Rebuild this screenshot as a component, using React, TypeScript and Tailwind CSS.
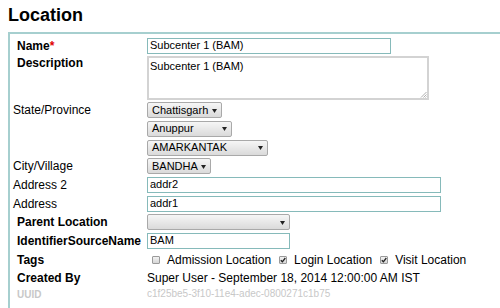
import React from "react";

function Select({ value, width }: { value: string; width: string }) {
  return (
    <div
      className={`${width} flex h-4 items-center justify-between rounded-[2px] border border-[#a9a9a9] bg-gradient-to-b from-[#f6f6f6] to-[#dadada] pl-[4px] pr-[4px] text-[11px] leading-none text-black`}
    >
      <span>{value}</span>
      <svg width="5" height="4" viewBox="0 0 5 4" className="mt-[1px]">
        <path d="M0 0 H5 L2.5 4 Z" fill="#222" />
      </svg>
    </div>
  );
}

function TextInput({ value, width }: { value: string; width: string }) {
  return (
    <div
      className={`${width} flex h-4 items-center border border-[#86baba] bg-white pl-[2px] text-[11px] leading-none text-black`}
    >
      {value}
    </div>
  );
}

function Check({ checked }: { checked?: boolean }) {
  return (
    <span className="mr-[7px] flex h-[8px] w-[8px] items-center justify-center rounded-[1px] border border-[#9a9a9a] bg-gradient-to-b from-[#f2f2f2] to-[#d6d6d6]">
      {checked && (
        <svg width="6" height="6" viewBox="0 0 6 6">
          <path d="M0.8 3.2 L2.4 4.8 L5.3 1" stroke="#222" strokeWidth="1.3" fill="none" />
        </svg>
      )}
    </span>
  );
}

function Row({
  label,
  bold,
  h,
  top,
  children,
}: {
  label?: React.ReactNode;
  bold?: boolean;
  h: string;
  top?: boolean;
  children?: React.ReactNode;
}) {
  return (
    <div className={`flex ${h} ${top ? "items-start" : "items-center"}`}>
      <div
        className={`w-[137px] shrink-0 text-[12px] leading-[14px] ${
          bold ? "pl-[7px] font-bold" : "pl-[3px]"
        } ${top ? "mt-[1px]" : ""}`}
      >
        {label}
      </div>
      <div className="flex items-center">{children}</div>
    </div>
  );
}

export default function App() {
  return (
    <div
      className="h-[308px] w-[500px] overflow-hidden bg-white text-black"
      style={{ fontFamily: '"Liberation Sans", Arial, sans-serif' }}
    >
      <h1 className="ml-2 mt-[4px] text-[18px] font-bold leading-[22px]">Location</h1>
      <div className="ml-2 mt-[6px] w-[560px] border-2 border-[#a6cfcf] pt-[2px] pb-4">
        <Row label={<>Name<span className="text-[#e00000]">*</span></>} bold h="h-[19px]">
          <TextInput value="Subcenter 1 (BAM)" width="w-[244px]" />
        </Row>
        <Row label="Description" bold h="h-[46px]" top>
          <div className="relative mt-[1px] h-[44px] w-[282px] border-2 border-[#d3d3d3] bg-white pl-[1px] pt-[1px] text-[11px] leading-[14px]">
            Subcenter 1 (BAM)
            <svg className="absolute bottom-0 right-0" width="7" height="7" viewBox="0 0 7 7">
              <path d="M6.5 1 L1 6.5 M6.5 3.5 L3.5 6.5 M6.5 5.5 L5.5 6.5" stroke="#9a9a9a" strokeWidth="0.8" />
            </svg>
          </div>
        </Row>
        <Row label="State/Province" h="h-[18px]">
          <Select value="Chattisgarh" width="w-[75px]" />
        </Row>
        <Row h="h-[19px]">
          <Select value="Anuppur" width="w-[85px]" />
        </Row>
        <Row h="h-[19px]">
          <Select value="AMARKANTAK" width="w-[121px]" />
        </Row>
        <Row label="City/Village" h="h-[18px]">
          <Select value="BANDHA" width="w-[64px]" />
        </Row>
        <Row label="Address 2" h="h-[19px]">
          <TextInput value="addr2" width="w-[294px]" />
        </Row>
        <Row label="Address" h="h-[19px]">
          <TextInput value="addr1" width="w-[294px]" />
        </Row>
        <Row label="Parent Location" bold h="h-[18px]">
          <Select value="" width="w-[143px]" />
        </Row>
        <Row label="IdentifierSourceName" bold h="h-[19px]">
          <TextInput value="BAM" width="w-[143px]" />
        </Row>
        <Row label="Tags" bold h="h-[19px]">
          <div className="flex items-center pl-[5px] text-[12px] leading-[14px]">
            <Check />
            <span className="mr-[8px]">Admission Location</span>
            <Check checked />
            <span className="mr-[8px]">Login Location</span>
            <Check checked />
            <span>Visit Location</span>
          </div>
        </Row>
        <Row label="Created By" bold h="h-[17px]">
          <span className="text-[12px] leading-[14px]">
            Super User - September 18, 2014 12:00:00 AM IST
          </span>
        </Row>
        <Row
          label={<span className="text-[10px] text-[#c8c8c8]">UUID</span>}
          bold
          h="h-[16px]"
        >
          <span className="text-[10px] leading-[12px] text-[#c8c8c8]">
            c1f25be5-3f10-11e4-adec-0800271c1b75
          </span>
        </Row>
      </div>
    </div>
  );
}
